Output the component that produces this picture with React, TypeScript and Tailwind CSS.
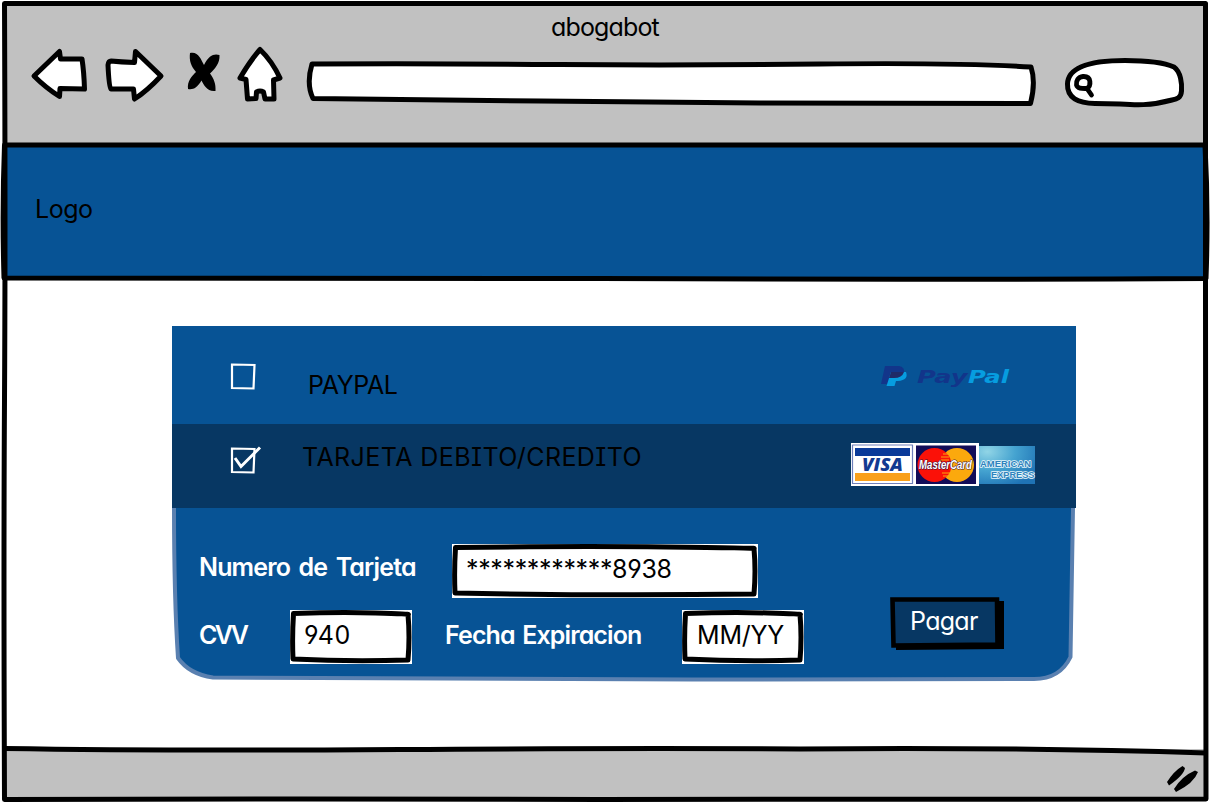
import React from "react";

type Box = { x: number; y: number; w: number; h: number };

/* A hand-drawn shape whose viewBox is given in page units. */
function Sketch({ box, className = "", children }: { box: Box; className?: string; children: React.ReactNode }) {
  return (
    <svg
      width={box.w}
      height={box.h}
      viewBox={`${box.x} ${box.y} ${box.w} ${box.h}`}
      className={`block shrink-0 overflow-visible ${className}`}
      fill="none"
      stroke="#000"
      strokeLinecap="round"
      strokeLinejoin="round"
    >
      {children}
    </svg>
  );
}

function Toolbar() {
  return (
    <header className="mr-1 flex h-[145px] shrink-0 flex-col bg-[#c1c1c1]">
      <h1 className="pt-[11px] pl-1 text-center text-[25px] leading-8 tracking-[-0.85px]">abogabot</h1>
      <div className="flex items-start pt-[1.500px] pl-[31px]">
        <Sketch box={{ x: 31, y: 44, w: 57, h: 60 }}>
          <path d="M34 75 59.500 50.500 60.500 58 82 58Q84 71 84.500 88L60 87.500 59.500 95.500Q46 87 34 75Z" fill="#fff" strokeWidth="5" />
        </Sketch>
        <Sketch box={{ x: 105, y: 44, w: 59, h: 60 }} className="ml-[17px]">
          <path d="M111 60Q121 61 134.500 61.500L135.500 50.500 161 75Q147 90 134.500 98L133.500 88H111Q109 86 108 64 108.500 60 111 60Z" fill="#fff" strokeWidth="5" />
        </Sketch>
        <Sketch box={{ x: 187, y: 44, w: 34, h: 60 }} className="ml-[23px]">
          <path
            d="M190 52C198 50 201 58 204 64 209 54 214 52.500 219.500 54 220 62 215 68 210 72.500 214 78 216 83 215.500 90 207 91 204 84 201.500 79.500 197 87 193 89 188 88 187 80 192 75 196 71 191 65 189 60 190 52Z"
            fill="#000"
            stroke="none"
          />
        </Sketch>
        <Sketch box={{ x: 237, y: 44, w: 46, h: 60 }} className="ml-4">
          <path d="M260 48.500Q250 60 240 77L246 78.500 247.500 98 256 97.500 256.500 91Q260 89 263.500 91L265 98 274 98 273.500 79 280 77Q272 60 260 48.500Z" fill="#fff" strokeWidth="5" />
        </Sketch>
        <Sketch box={{ x: 306, y: 44, w: 730, h: 60 }} className="ml-[23px]">
          <path d="M312 63Q440 62.500 560 63.500T820 63 1031 66Q1036 81 1030.500 102.500L760 102 540 100 313 97.500Q306 83 312 63Z" fill="#fff" strokeWidth="5" />
        </Sketch>
        <Sketch box={{ x: 1064, y: 44, w: 122, h: 60 }} className="ml-7">
          <path d="M1067.500 83C1068 66 1090 59.500 1125 59.500 1150 59.500 1165 62 1174 66 1181 71 1182 83 1181.500 90 1181 97 1177 98 1172 99 1150 105 1135 104 1120 103L1095 102.500C1078 102 1067 97 1067.500 83Z" fill="#fff" strokeWidth="5" />
          <path d="M1083 75.500C1078 76 1076 80 1076.500 84 1077.500 88 1083 87.500 1087 87.500 1091 85 1092 75 1083 75.500ZM1087 87.500 1091.500 94" strokeWidth="4.800" />
        </Sketch>
      </div>
    </header>
  );
}

function PayPalLogo() {
  return (
    <Sketch box={{ x: 880, y: 362, w: 132, h: 28 }}>
      <g stroke="none">
        <path d="M885 365H899Q905 366 904 372 902 379 893 379H889L888 383H881Z" fill="#12358a" />
        <path d="M891 371H906Q909 379 898 380H896L894.500 385H886.500Z" fill="#069de0" />
        <path d="M891 371H904Q902 377 894 377H889Z" fill="#1f2a68" />
        <text x="917" y="382" fontFamily="DejaVu Sans, sans-serif" fontWeight="700" fontStyle="italic" fontSize="17" textLength="50.500" lengthAdjust="spacingAndGlyphs" fill="#12358a">Pay</text>
        <text x="968" y="382" fontFamily="DejaVu Sans, sans-serif" fontWeight="700" fontStyle="italic" fontSize="17" textLength="41" lengthAdjust="spacingAndGlyphs" fill="#069de0">Pal</text>
      </g>
    </Sketch>
  );
}

function CardLogos() {
  return (
    <Sketch box={{ x: 851, y: 443, w: 185, h: 43 }}>
      <defs>
        <radialGradient id="amex" cx="0.15" cy="0.15" r="1">
          <stop offset="0" stopColor="#91d5e6" />
          <stop offset="0.5" stopColor="#45a3d0" />
          <stop offset="1" stopColor="#1f73b5" />
        </radialGradient>
      </defs>
      <g stroke="none">
        <rect x="851" y="443" width="128" height="43" fill="#fff" />
        <rect x="852.500" y="445" width="60" height="38.500" fill="#fff" stroke="#6f80bb" strokeWidth="1.200" />
        <rect x="855" y="448" width="55" height="8" fill="#0a3a99" />
        <rect x="855" y="473" width="55" height="8" fill="#f9a01b" />
        <text x="862" y="471" fontFamily="Open Sans, sans-serif" fontWeight="800" fontStyle="italic" fontSize="18" textLength="41" lengthAdjust="spacingAndGlyphs" fill="#123a91">VISA</text>
        <rect x="916" y="445.500" width="60" height="38.500" fill="#120d58" />
        <circle cx="957" cy="465" r="17" fill="#fba90d" />
        <circle cx="934.500" cy="465" r="17" fill="#fb1108" />
        <path d="M943 454h7M941 457h8M941 460h8M942 473h8M943 476h9" stroke="#fba90d" strokeWidth="1" strokeLinecap="butt" />
        <text x="919" y="469" fontFamily="Liberation Sans, sans-serif" fontWeight="700" fontStyle="italic" fontSize="12" textLength="53" lengthAdjust="spacingAndGlyphs" fill="#fff" stroke="#3a1540" strokeWidth="1.200" paintOrder="stroke">MasterCard</text>
        <rect x="979" y="446" width="56" height="38" fill="url(#amex)" />
        <g fontFamily="Liberation Sans, sans-serif" fontWeight="700" fontSize="9.500" fill="#2f83bd" stroke="#e8f6fb" strokeWidth="1.600" paintOrder="stroke">
          <text x="980" y="467" textLength="51" lengthAdjust="spacingAndGlyphs">AMERICAN</text>
          <text x="991" y="478" textLength="43.500" lengthAdjust="spacingAndGlyphs">EXPRESS</text>
        </g>
      </g>
    </Sketch>
  );
}

function SketchInput({ w, label, value, className }: { w: number; label: string; value: string; className: string }) {
  const h = 54;
  return (
    <div className="relative flex h-[54px] shrink-0 items-start bg-white" style={{ width: w }} aria-label={label}>
      <svg className="absolute inset-0" width={w} height={h} fill="none" stroke="#000" strokeWidth="5" strokeLinejoin="round">
        <path d={`M3.500 3.500Q${w * 0.4} 2 ${w * 0.7} 3T${w - 4} 4.500Q${w - 2} ${h / 2} ${w - 4} ${h - 4}Q${w * 0.5} ${h - 2} 3 ${h - 5}Q2 ${h / 2} 3.500 3.500Z`} />
      </svg>
      <span className={`relative whitespace-nowrap leading-8 ${className}`}>{value}</span>
    </div>
  );
}

function PaymentForm() {
  return (
    <section className="relative flex h-[174px]">
      <svg className="absolute inset-0 overflow-visible" width="904" height="174" fill="none">
        <path
          d="M2 0Q2 90 6 150 17 166 41 169.500Q300 171.500 520 171.500 700 170.500 862 171 888 171 898.500 149L901 0"
          fill="#075395"
          stroke="#5a80b0"
          strokeWidth="4"
          strokeLinejoin="round"
        />
      </svg>
      <div className="relative flex flex-col gap-3 pt-9 pl-[27px] text-[25px]">
        <div className="flex">
          <label className="w-[253px] pt-[7px] leading-8 font-semibold tracking-[-0.85px] text-white [word-spacing:3px]">Numero de Tarjeta</label>
          <SketchInput w={306} label="Numero de Tarjeta" value="************8938" className="pt-[9px] pl-[14px] tracking-[-0.35px]" />
        </div>
        <div className="flex">
          <label className="w-[91px] pt-[9px] leading-8 font-semibold tracking-[-2.6px] text-white">CVV</label>
          <SketchInput w={122} label="CVV" value="940" className="pt-[9px] pl-[14px] tracking-[0.4px]" />
          <label className="ml-[33px] w-[237px] pt-[9px] leading-8 font-semibold tracking-[-0.88px] text-white [word-spacing:2px]">Fecha Expiracion</label>
          <SketchInput w={122} label="Fecha Expiracion" value="MM/YY" className="pt-[9px] pl-[15px] tracking-[-0.2px]" />
        </div>
      </div>
      <button className="relative mt-[88px] ml-[86px] flex h-[54px] w-[114px] items-start">
        <svg className="absolute inset-0" width="114" height="54" stroke="#000">
          <path d="M6 5H114V53L6 54Z" fill="#000" stroke="none" />
          <path d="M2.500 3.500 107 3.500 107.500 48.500 3.500 49.500Z" fill="#073763" strokeWidth="4.600" />
        </svg>
        <span className="relative pt-[9px] pl-[20px] text-[25px] leading-8 tracking-[-0.7px] text-white">Pagar</span>
      </button>
    </section>
  );
}

function Checkbox({ checked = false }: { checked?: boolean }) {
  return (
    <svg className="block shrink-0 overflow-visible" width="24" height="27" fill="none" stroke="#fff" strokeWidth="2.200" role="checkbox" aria-checked={checked}>
      <path d="M1 1.500 23.500 2 22.500 25.500 1 25Z" />
      {checked && <path d="M4 11 10 19.500 29 0.500" strokeWidth="3" />}
    </svg>
  );
}

export default function App() {
  return (
    <div className="relative flex h-[804px] w-[1210px] flex-col overflow-hidden bg-white font-['Inter','Liberation_Sans',sans-serif] text-black [font-feature-settings:'cv11','cv08','cv04']">
      <Toolbar />
      <nav className="mx-1 flex h-[134px] shrink-0 items-start bg-[#075395] pt-12 pl-[31px] text-[25px] leading-8 tracking-[-0.5px]">Logo</nav>
      <main className="mx-1 h-[470px] shrink-0 pt-[47px] pl-[168px]">
        <div className="w-[904px]">
          <div className="flex h-[98px] items-start bg-[#075395] pt-[37px] pl-[59px]">
            <Checkbox />
            <span className="mt-[6px] ml-[53px] w-[572px] text-[25px] leading-8 tracking-[-0.4px]">PAYPAL</span>
            <PayPalLogo />
          </div>
          <div className="flex h-[84px] items-start bg-[#073763] pt-[19px] pl-[59px]">
            <div className="pt-1"><Checkbox checked /></div>
            <span className="-mt-[2px] ml-[47px] w-[549px] text-[25px] leading-8 tracking-[0.42px] whitespace-nowrap">TARJETA DEBITO/CREDITO</span>
            <CardLogos />
          </div>
          <PaymentForm />
        </div>
      </main>
      <footer className="mx-1 flex h-[50px] shrink-0 items-start justify-end bg-[#c1c1c1] pt-4 pr-2">
        <Sketch box={{ x: 1166, y: 765, w: 32, h: 28 }}>
          <path d="M1167 782Q1174 771 1182.500 766L1185 768Q1184 775 1169 785.500ZM1174 789Q1182 776 1195 770.500L1198 772Q1194 783 1176 792Z" fill="#000" stroke="none" />
        </Sketch>
      </footer>
      <svg className="pointer-events-none absolute inset-0" width="1210" height="804" fill="none" stroke="#000" strokeWidth="5" strokeLinejoin="round">
        <path d="M0 0H1210V804H0ZM4 3V800L1206 799V3Z" fill="#fff" stroke="none" fillRule="evenodd" />
        <path d="M4.500 3.500H1205.500Q1206 150 1205.500 300T1206 799L600 799.500 300 799 4.500 799.500Q3.500 560 4.500 400T4.500 3.500Z" />
        <path d="M4.500 145H1205Q1208.500 210 1206 278.500Q900 280 600 278.500T4 278Q2 210 4.500 145Z" />
        <path d="M4.500 748.500Q160 751 400 749.500T800 749Q1010 747 1206 753" />
      </svg>
    </div>
  );
}
